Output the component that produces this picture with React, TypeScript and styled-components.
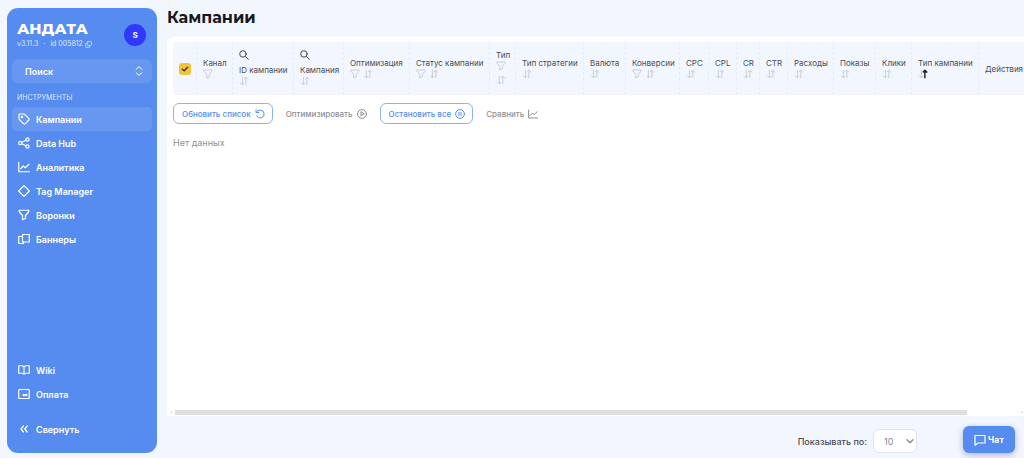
import React from "react";
import styled, { createGlobalStyle } from "styled-components";

const GlobalStyle = createGlobalStyle`
  * { box-sizing: border-box; }
  body {
    margin: 0;
    background: #f2f6fe;
    font-family: Inter, "Liberation Sans", sans-serif;
    color: #4a4d55;
    overflow-x: hidden;
  }
  button, select { font: inherit; color: inherit; }
`;

/* ---------- icons ---------- */

const Svg = styled.svg<{ $size: number; $stroke?: number }>`
  width: ${(p) => p.$size}px;
  height: ${(p) => p.$size}px;
  flex: none;
  display: block;
  fill: none;
  stroke: currentColor;
  stroke-width: ${(p) => p.$stroke ?? 2.4};
  stroke-linecap: round;
  stroke-linejoin: round;
`;

const shapes = {
  tag: (
    <>
      <path d="M2 3.500A1.500 1.500 0 0 1 3.500 2h7.700a3 3 0 0 1 2.100.900l8 8a2.600 2.600 0 0 1 0 3.700l-6.700 6.700a2.600 2.600 0 0 1-3.700 0l-8-8A3 3 0 0 1 2 11.200z" />
      <circle cx="8" cy="8" r="1.200" />
    </>
  ),
  share: (
    <>
      <circle cx="4.500" cy="12" r="3.200" />
      <circle cx="19" cy="5" r="3.200" />
      <circle cx="19" cy="19" r="3.200" />
      <path d="M7.500 10.500l8.500-4M7.500 13.500l8.500 4" />
    </>
  ),
  chart: <path d="M1.500 2.500v19H23M5.500 15.500l5-5.500 4 3.500L22 6.500" />,
  diamond: <path d="M12 1.200L22.800 12 12 22.800 1.200 12z" />,
  funnel: <path d="M2.500 2.500h19V5.500l-6.500 7.500v6L9 21.500V13L2.500 5.500z" />,
  banners: (
    <>
      <path d="M9 3h13.500v15H9z" />
      <path d="M9 7H1.500v14H11v-3" />
    </>
  ),
  book: <path d="M12 6c-1.500-1.500-3-2.500-5-2.500H1.500v15H8c2 0 3 .500 4 2 1-1.500 2-2 4-2h6.500v-15H17c-2 0-3.500 1-5 2.500zM12 6v14" />,
  card: (
    <>
      <rect x="1.500" y="3" width="21" height="18" rx="1.500" />
      <circle cx="11.500" cy="14" r="1.300" fill="currentColor" />
      <circle cx="16.500" cy="14" r="1.300" fill="currentColor" />
    </>
  ),
  collapse: <path d="M11 6l-5 6 5 6M18.500 6l-5 6 5 6" />,
  updown: <path d="M5 8l7-6.500L19 8M5 16l7 6.500 7-6.500" />,
  copy: (
    <>
      <rect x="8" y="2" width="14" height="13" rx="2" />
      <path d="M8 8H4a2 2 0 0 0-2 2v10a2 2 0 0 0 2 2h10a2 2 0 0 0 2-2v-5" />
    </>
  ),
  search: (
    <>
      <circle cx="9.500" cy="9.500" r="7.800" />
      <path d="M15.500 15.500L22.500 22.500" />
    </>
  ),
  refresh: <path d="M2.500 2v6.500H9M3.500 8C5.500 4.500 8.500 2.500 12.500 2.500a9.500 9.500 0 1 1-8.500 14" />,
  play: (
    <>
      <circle cx="12" cy="12" r="10.500" />
      <path d="M9.500 7.500v9l7-4.500z" />
    </>
  ),
  pause: (
    <>
      <circle cx="12" cy="12" r="10.500" />
      <path d="M9.500 8v8M14.500 8v8" />
    </>
  ),
  chat: <path d="M2 3h20v15H8l-6 4.500z" />,
  check: <path d="M4 12.500l5.500 5L20 7" />,
};

type IconName = keyof typeof shapes;

const Icon = ({ name, size = 12, stroke }: { name: IconName; size?: number; stroke?: number }) => (
  <Svg viewBox="0 0 24 24" $size={size} $stroke={stroke} aria-hidden="true">
    {shapes[name]}
  </Svg>
);

const SortIcon = ({ ascending }: { ascending?: boolean }) => (
  <Svg viewBox="0 0 24 24" $size={10} aria-hidden="true">
    <path d="M8 3v18M3.500 16.500L8 21l4-4" />
    <path
      d="M16.500 21V3M12.500 7l4-4L21 7.500"
      stroke={ascending ? "#222" : undefined}
      strokeWidth={ascending ? 3.5 : undefined}
    />
  </Svg>
);

/* ---------- sidebar ---------- */

const Page = styled.div`
  display: flex;
  gap: 10px;
  min-height: 100vh;
  padding: 8px 0 0 7px;
`;

const Sidebar = styled.aside`
  display: flex;
  flex-direction: column;
  flex: none;
  width: 150px;
  margin-bottom: 5px;
  padding: 12px 5px 12px;
  border-radius: 11px;
  background: #568cf0;
  color: #fff;
`;

const Brand = styled.header`
  display: flex;
  align-items: center;
  justify-content: space-between;
  height: 30px;
  padding: 0 6px 0 5px;
`;

const Logo = styled.div`
  font-family: Montserrat, Inter, sans-serif;
  font-size: 15px;
  font-weight: 800;
  line-height: 18px;
`;

const Version = styled.div`
  display: flex;
  align-items: center;
  gap: 5px;
  font-size: 7px;
  line-height: 12px;
  color: #dbe7ff;
  white-space: nowrap;
`;

const CopyId = styled.button`
  display: flex;
  align-items: center;
  gap: 2px;
  padding: 0;
  border: 0;
  background: none;
`;

const Avatar = styled.button`
  width: 22px;
  height: 22px;
  padding: 0;
  border: 0;
  border-radius: 50%;
  background: #3039fb;
  font-size: 8px;
  font-weight: 700;
`;

const SearchButton = styled.button`
  display: flex;
  align-items: center;
  justify-content: space-between;
  height: 24px;
  margin-top: 9px;
  padding: 0 8px 0 13px;
  border: 0;
  border-radius: 6px;
  background: #6797f1;
  font-size: 9px;
  font-weight: 600;
`;

const SectionTitle = styled.h2`
  margin: 9px 0 3px;
  padding-left: 5px;
  font-size: 7px;
  font-weight: 400;
  line-height: 12px;
  color: #dbe7ff;
`;

const Menu = styled.nav`
  display: flex;
  flex-direction: column;
`;

const MenuLink = styled.a<{ $active?: boolean }>`
  display: flex;
  align-items: center;
  gap: 6px;
  height: 24px;
  padding-left: 6px;
  border-radius: 5px;
  background: ${(p) => (p.$active ? "#6797f1" : "transparent")};
  color: #fff;
  font-size: 9px;
  font-weight: 600;
  text-decoration: none;
`;

const BottomMenu = styled(Menu)`
  margin-top: auto;
`;

const CollapseButton = styled(MenuLink).attrs({ as: "button" })`
  margin-top: 11px;
  border: 0;
`;

/* ---------- main area ---------- */

const Main = styled.main`
  display: flex;
  flex-direction: column;
  flex: 1;
  min-width: 0;
`;

const Title = styled.h1`
  margin: 0 0 9px;
  font-family: Montserrat, Inter, sans-serif;
  font-size: 16px;
  font-weight: 700;
  line-height: 20px;
  color: #17181c;
`;

const Card = styled.section`
  display: flex;
  flex-direction: column;
  flex: 1;
  border-radius: 6px 0 0 0;
  background: #fff;
`;

const TableScroll = styled.div`
  overflow: hidden;
  padding: 5px 0 0 6px;
`;

const Table = styled.table`
  table-layout: fixed;
  width: 865px;
  border-collapse: separate;
  border-spacing: 0;
`;

const HeadCell = styled.th`
  height: 53px;
  padding: 0 0 0 6px;
  border-right: 1px dashed #e6ebf4;
  background: #f2f6fe;
  font-size: 8px;
  font-weight: 400;
  line-height: 12px;
  text-align: left;
  white-space: nowrap;
  &:first-child { border-radius: 4px 0 0 4px; }
`;

const Tools = styled.div<{ $stacked?: boolean }>`
  display: flex;
  flex-direction: ${(p) => (p.$stacked ? "column" : "row")};
  gap: ${(p) => (p.$stacked ? 4 : 3)}px;
  padding-bottom: ${(p) => (p.$stacked ? 4 : 2)}px;
  color: #c9cdd6;
`;

const SearchTool = styled.div`
  display: flex;
  height: 14px;
  color: #44474e;
`;

const CheckLabel = styled.label`
  display: flex;
  position: relative;
  width: 12px;
  height: 12px;
  color: #3a3416;
`;

const CheckBox = styled.input`
  appearance: none;
  width: 12px;
  height: 12px;
  margin: 0;
  border-radius: 3px;
  background: #f2c340;
`;

const CheckMark = styled.span`
  position: absolute;
  inset: 2px;
  pointer-events: none;
`;

const Actions = styled.div`
  display: flex;
  gap: 13px;
  padding: 8px 6px 0;
`;

const ActionButton = styled.button<{ $outlined?: boolean }>`
  display: flex;
  align-items: center;
  gap: 4px;
  height: 21px;
  padding: ${(p) => (p.$outlined ? "0 7px 0 8px" : "0")};
  border: ${(p) => (p.$outlined ? "1px solid #8db2f6" : "0")};
  border-radius: 6px;
  background: #fff;
  color: ${(p) => (p.$outlined ? "#568cf0" : "#8d8f94")};
  font-size: 8px;
  font-weight: 500;
  white-space: nowrap;
`;

const Empty = styled.p`
  margin: 12px 6px 0;
  font-size: 9px;
  line-height: 14px;
  color: #8d8f94;
`;

const ScrollBar = styled.div`
  display: flex;
  align-items: center;
  gap: 3px;
  margin-top: auto;
  height: 8px;
  padding: 0 1px 0 3px;
  color: #c9c9c9;
  font-size: 6px;
  line-height: 8px;
`;

const ScrollTrack = styled.div`
  flex: 1;
`;

const ScrollThumb = styled.div`
  width: 94%;
  height: 5px;
  background: #dfdfdf;
`;

const Footer = styled.footer`
  display: flex;
  align-items: center;
  justify-content: flex-end;
  height: 42px;
  padding: 8px 107px 0 0;
`;

const PageSizeLabel = styled.label`
  display: flex;
  align-items: center;
  gap: 6px;
  font-size: 9px;
  font-weight: 500;
`;

const PageSize = styled.div`
  display: flex;
  position: relative;
  color: #85888e;
  font-weight: 400;
`;

const PageSizeSelect = styled.select`
  appearance: none;
  width: 44px;
  height: 24px;
  padding: 0 0 0 10px;
  border: 1px solid #dfe3ea;
  border-radius: 6px;
  background: #fff;
  font-size: 9px;
`;

const SelectArrow = styled.span`
  position: absolute;
  top: 8px;
  right: 3px;
  pointer-events: none;
`;

const ChatButton = styled.button`
  display: flex;
  position: fixed;
  right: 9px;
  bottom: 5px;
  align-items: center;
  justify-content: center;
  gap: 2px;
  width: 52px;
  height: 27px;
  padding: 0;
  border: 0;
  border-radius: 6px;
  background: #568cf0;
  box-shadow: 0 2px 6px rgba(40, 60, 110, 0.35);
  color: #fff;
  font-size: 9px;
  font-weight: 700;
`;

type Column = {
  title: string;
  width: number;
  search?: boolean;
  filter?: boolean;
  sort?: boolean;
  ascending?: boolean;
  stacked?: boolean;
};

const columns: Column[] = [
  { title: "Канал", width: 36, filter: true },
  { title: "ID кампании", width: 61, search: true, sort: true },
  { title: "Кампания", width: 50, search: true, sort: true },
  { title: "Оптимизация", width: 66, filter: true, sort: true },
  { title: "Статус кампании", width: 80, filter: true, sort: true },
  { title: "Тип", width: 26, filter: true, sort: true, stacked: true },
  { title: "Тип стратегии", width: 68, sort: true },
  { title: "Валюта", width: 42, sort: true },
  { title: "Конверсии", width: 54, filter: true, sort: true },
  { title: "CPC", width: 29, sort: true },
  { title: "CPL", width: 28, sort: true },
  { title: "CR", width: 23, sort: true },
  { title: "CTR", width: 28, sort: true },
  { title: "Расходы", width: 46, sort: true },
  { title: "Показы", width: 42, sort: true },
  { title: "Клики", width: 36, sort: true },
  { title: "Тип кампании", width: 67, sort: true, ascending: true },
  { title: "Действия", width: 59 },
];

const tools: { title: string; icon: IconName }[] = [
  { title: "Кампании", icon: "tag" },
  { title: "Data Hub", icon: "share" },
  { title: "Аналитика", icon: "chart" },
  { title: "Tag Manager", icon: "diamond" },
  { title: "Воронки", icon: "funnel" },
  { title: "Баннеры", icon: "banners" },
];

export default function App() {
  return (
    <>
      <GlobalStyle />
      <Page>
        <Sidebar>
          <Brand>
            <div>
              <Logo>АНДАТА</Logo>
              <Version>
                <span>v3.11.3</span>
                <span>·</span>
                <CopyId type="button">
                  id 005812 <Icon name="copy" size={7} />
                </CopyId>
              </Version>
            </div>
            <Avatar type="button">S</Avatar>
          </Brand>
          <SearchButton type="button">
            Поиск
            <Icon name="updown" size={10} />
          </SearchButton>
          <SectionTitle>ИНСТРУМЕНТЫ</SectionTitle>
          <Menu>
            {tools.map((item, i) => (
              <MenuLink key={item.title} href="#" $active={i === 0}>
                <Icon name={item.icon} />
                {item.title}
              </MenuLink>
            ))}
          </Menu>
          <BottomMenu>
            <MenuLink href="#">
              <Icon name="book" />
              Wiki
            </MenuLink>
            <MenuLink href="#">
              <Icon name="card" />
              Оплата
            </MenuLink>
            <CollapseButton>
              <Icon name="collapse" />
              Свернуть
            </CollapseButton>
          </BottomMenu>
        </Sidebar>

        <Main>
          <Title>Кампании</Title>
          <Card>
            <TableScroll>
              <Table>
                <colgroup>
                  <col width={24} />
                  {columns.map((c) => (
                    <col key={c.title} width={c.width} />
                  ))}
                </colgroup>
                <thead>
                  <tr>
                    <HeadCell>
                      <CheckLabel>
                        <CheckBox type="checkbox" defaultChecked aria-label="Выбрать все" />
                        <CheckMark>
                          <Icon name="check" size={8} stroke={4} />
                        </CheckMark>
                      </CheckLabel>
                    </HeadCell>
                    {columns.map((c) => (
                      <HeadCell key={c.title}>
                        {c.search && (
                          <SearchTool>
                            <Icon name="search" size={10} />
                          </SearchTool>
                        )}
                        {c.title}
                        {(c.filter || c.sort) && (
                          <Tools $stacked={c.stacked}>
                            {c.filter && <Icon name="funnel" size={10} />}
                            {c.sort && <SortIcon ascending={c.ascending} />}
                          </Tools>
                        )}
                      </HeadCell>
                    ))}
                  </tr>
                </thead>
              </Table>
            </TableScroll>
            <Actions>
              <ActionButton type="button" $outlined>
                Обновить список <Icon name="refresh" size={10} />
              </ActionButton>
              <ActionButton type="button">
                Оптимизировать <Icon name="play" size={10} />
              </ActionButton>
              <ActionButton type="button" $outlined>
                Остановить все <Icon name="pause" size={10} />
              </ActionButton>
              <ActionButton type="button">
                Сравнить <Icon name="chart" size={10} />
              </ActionButton>
            </Actions>
            <Empty>Нет данных</Empty>
            <ScrollBar aria-hidden="true">
              <span>‹</span>
              <ScrollTrack>
                <ScrollThumb />
              </ScrollTrack>
              <span>›</span>
            </ScrollBar>
          </Card>
          <Footer>
            <PageSizeLabel>
              Показывать по:
              <PageSize>
                <PageSizeSelect defaultValue="10">
                  <option>10</option>
                  <option>25</option>
                  <option>50</option>
                </PageSizeSelect>
                <SelectArrow>
                  <Svg viewBox="0 0 24 24" $size={8} $stroke={4}>
                    <path d="M3 8l9 9 9-9" />
                  </Svg>
                </SelectArrow>
              </PageSize>
            </PageSizeLabel>
          </Footer>
        </Main>
      </Page>
      <ChatButton type="button">
        <Icon name="chat" size={12} />
        Чат
      </ChatButton>
    </>
  );
}
